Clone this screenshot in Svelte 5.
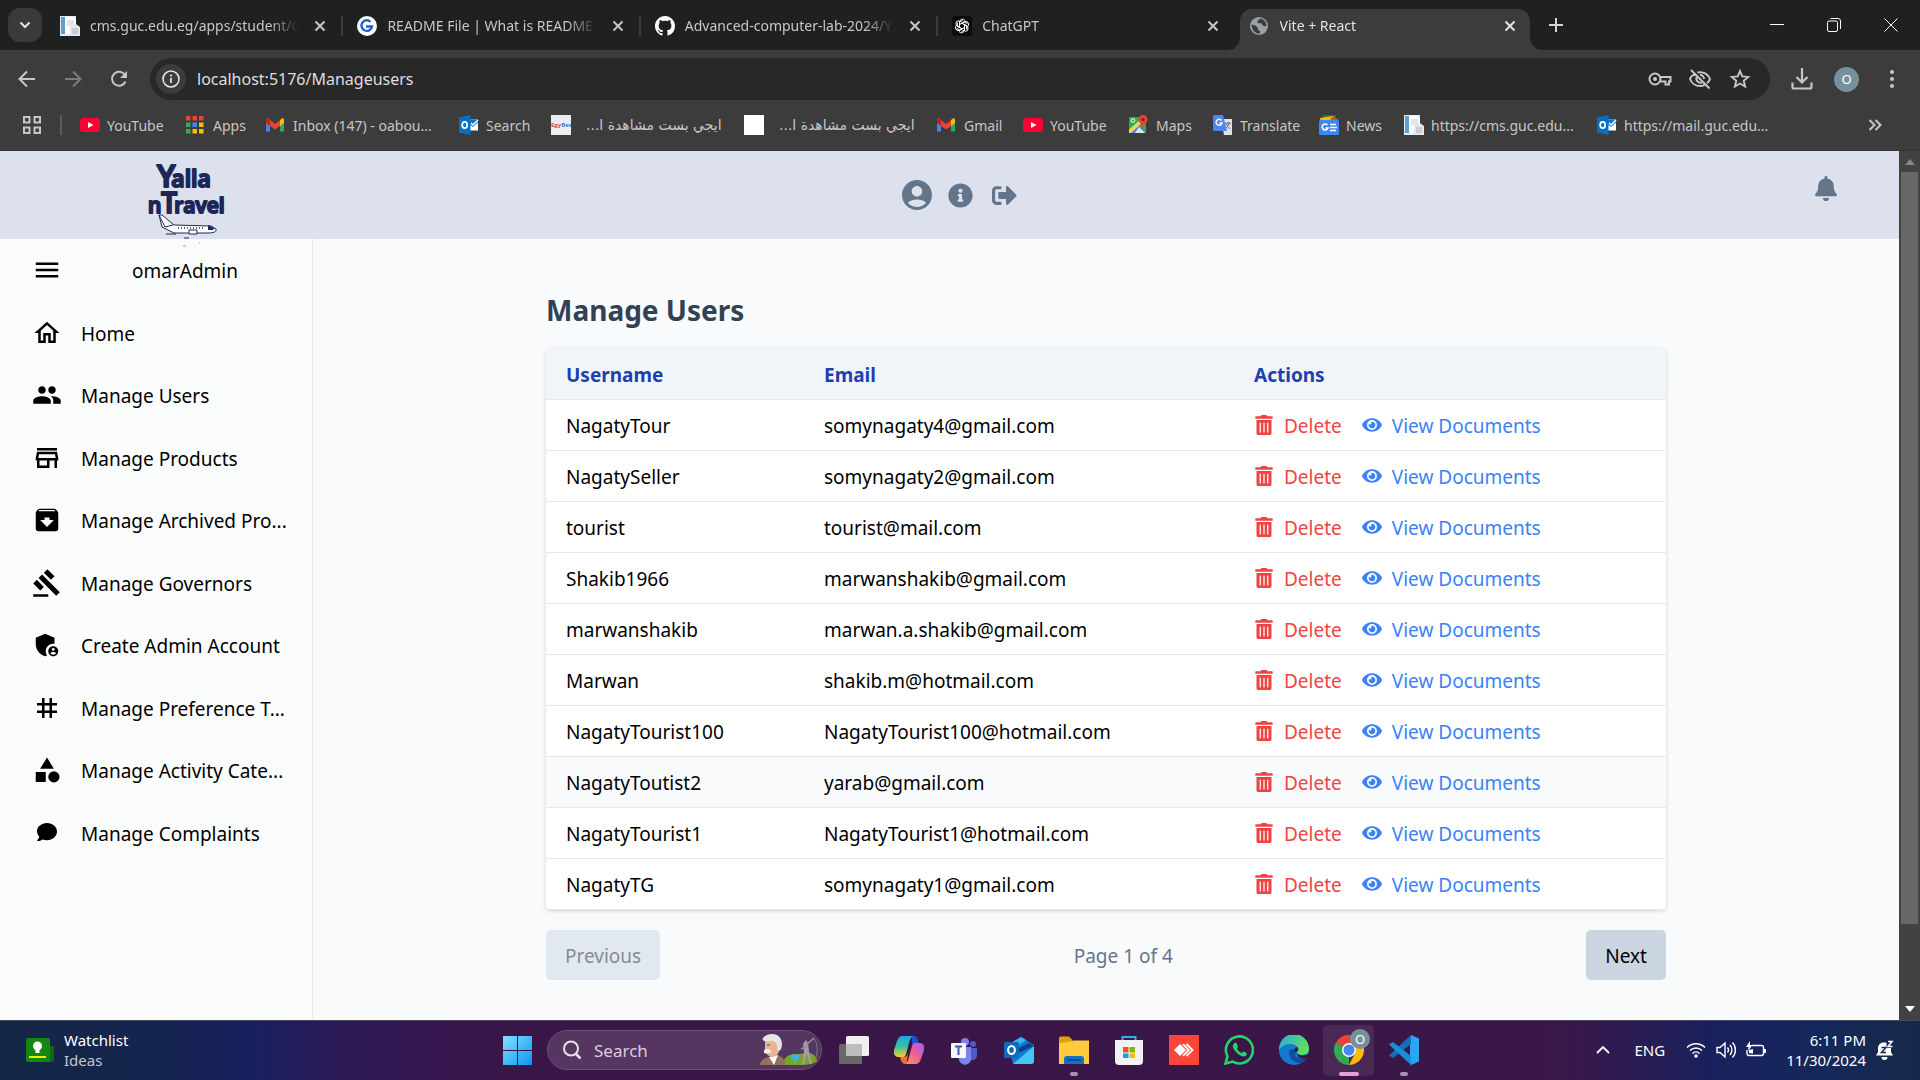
<script>
  const tabs = [
    { icon: 'doc', title: 'cms.guc.edu.eg/apps/student/C' },
    { icon: 'gfg', title: 'README File | What is README' },
    { icon: 'github', title: 'Advanced-computer-lab-2024/Y' },
    { icon: 'gpt', title: 'ChatGPT' },
    { icon: 'globe', title: 'Vite + React', active: true }
  ];

  const bookmarks = [
    { icon: 'youtube', label: 'YouTube' },
    { icon: 'apps', label: 'Apps' },
    { icon: 'gmail', label: 'Inbox (147) - oabou...' },
    { icon: 'outlookmail', label: 'Search' },
    { icon: 'egybest', label: 'ايجي بست مشاهدة ا...', rtl: true },
    { icon: 'blank', label: 'ايجي بست مشاهدة ا...', rtl: true },
    { icon: 'gmail', label: 'Gmail' },
    { icon: 'youtube', label: 'YouTube' },
    { icon: 'maps', label: 'Maps' },
    { icon: 'translate', label: 'Translate' },
    { icon: 'news', label: 'News' },
    { icon: 'doc', label: 'https://cms.guc.edu...' },
    { icon: 'outlookmail', label: 'https://mail.guc.edu...' }
  ];

  const menu = [
    { label: 'Home', path: 'M12 5.69l5 4.5V18h-2v-6H9v6H7v-7.81l5-4.5M12 3L2 12h3v8h6v-6h2v6h6v-8h3L12 3z' },
    { label: 'Manage Users', path: 'M16 11c1.66 0 2.99-1.34 2.99-3S17.66 5 16 5c-1.66 0-3 1.34-3 3s1.34 3 3 3zm-8 0c1.66 0 2.99-1.34 2.99-3S9.66 5 8 5C6.34 5 5 6.34 5 8s1.34 3 3 3zm0 2c-2.33 0-7 1.17-7 3.5V19h14v-2.5c0-2.33-4.67-3.5-7-3.5zm8 0c-.29 0-.62.02-.97.05 1.16.84 1.97 1.97 1.97 3.45V19h6v-2.5c0-2.33-4.67-3.5-7-3.5z' },
    { label: 'Manage Products', path: 'M18.36 9l.6 3H5.04l.6-3h12.72M20 4H4v2h16V4zm0 3H4l-1 5v2h1v6h10v-6h4v6h2v-6h1v-2l-1-5zM6 18v-4h6v4H6z' },
    { label: 'Manage Archived Pro...', path: 'M20.54 5.23l-1.39-1.68C18.88 3.21 18.47 3 18 3H6c-.47 0-.88.21-1.16.55L3.46 5.23C3.17 5.57 3 6.02 3 6.5V19c0 1.1.9 2 2 2h14c1.1 0 2-.9 2-2V6.5c0-.48-.17-.93-.46-1.27zM12 17.5L6.5 12H10v-2h4v2h3.5L12 17.5zM5.12 5l.81-1h12l.94 1H5.12z' },
    { label: 'Manage Governors', path: 'M1 21h12v2H1v-2zM5.245 8.07l2.83-2.827 14.14 14.142-2.828 2.828L5.245 8.07zM12.317 1l5.657 5.656-2.83 2.83-5.654-5.66L12.317 1zM3.825 9.485l5.657 5.657-2.828 2.828-5.657-5.657 2.828-2.828z' },
    { label: 'Create Admin Account', path: 'M17 11c.34 0 .67.04 1 .09V6.27L10.5 3 3 6.27v4.91c0 4.54 3.2 8.79 7.5 9.82.55-.13 1.08-.32 1.6-.55-.69-.98-1.1-2.17-1.1-3.45 0-3.31 2.69-6 6-6zM17 13c-2.21 0-4 1.79-4 4s1.79 4 4 4 4-1.79 4-4-1.79-4-4-4zm0 1.38c.62 0 1.12.51 1.12 1.12s-.51 1.12-1.12 1.12-1.12-.51-1.12-1.12.5-1.12 1.12-1.12zm0 5.37c-.93 0-1.74-.46-2.24-1.17.05-.72 1.51-1.08 2.24-1.08s2.19.36 2.24 1.08c-.5.71-1.31 1.17-2.24 1.17z' },
    { label: 'Manage Preference T...', path: 'M20 10V8h-4V4h-2v4h-4V4H8v4H4v2h4v4H4v2h4v4h2v-4h4v4h2v-4h4v-2h-4v-4h4zm-6 4h-4v-4h4v4z' },
    { label: 'Manage Activity Cate...', path: 'M12 2l-5.5 9h11L12 2zM17.5 13a4.5 4.5 0 1 0 0 9a4.5 4.5 0 1 0 0-9zM3 13.5h8v8H3z' },
    { label: 'Manage Complaints', path: 'M12 4c-4.4 0-8 2.9-8 6.6 0 1.6.7 3.100 1.800 4.200-.2 1.100-.7 2.100-1.600 2.900-.3.300-.1.700.3.700 1.600 0 2.900-.600 3.900-1.300 1.100.4 2.300.600 3.600.6 4.400 0 8-3 8-6.900S16.400 4 12 4z' }
  ];

  const users = [
    ['NagatyTour', 'somynagaty4@gmail.com'],
    ['NagatySeller', 'somynagaty2@gmail.com'],
    ['tourist', 'tourist@mail.com'],
    ['Shakib1966', 'marwanshakib@gmail.com'],
    ['marwanshakib', 'marwan.a.shakib@gmail.com'],
    ['Marwan', 'shakib.m@hotmail.com'],
    ['NagatyTourist100', 'NagatyTourist100@hotmail.com'],
    ['NagatyToutist2', 'yarab@gmail.com'],
    ['NagatyTourist1', 'NagatyTourist1@hotmail.com'],
    ['NagatyTG', 'somynagaty1@gmail.com']
  ];
  const hovered = 7;

  const taskApps = ['taskview', 'copilot', 'teams', 'outlook', 'explorer', 'store', 'anydesk', 'whatsapp', 'edge', 'chrome', 'vscode'];
  const running = ['explorer', 'vscode'];
</script>

{#snippet closeX()}
  <svg width="12" height="12" viewBox="0 0 12 12"><path d="M1.500 1.500l9 9M10.500 1.500l-9 9" stroke="currentColor" stroke-width="2" fill="none" /></svg>
{/snippet}

{#snippet siteIcon(name)}
  <svg class="site" viewBox="0 0 20 20">
    {#if name === 'doc'}
      <path d="M0 0h16v20H0z" fill="#e8edf2" /><path d="M1 1h4v17H1z" fill="#5f9fd0" />
      <path d="M5 1h8l3 3v14H5z" fill="#fff" /><path d="M7 5h7M7 7h7M7 9h7" stroke="#c3ccd4" />
      <path d="M10 8h6l4 3v9H10z" fill="#e4e8ec" /><path d="M12 13h6M12 15h6M12 17h6" stroke="#aab4bd" />
    {:else if name === 'gfg'}
      <circle cx="10" cy="10" r="10" fill="#fff" />
      <path d="M13.500 5.800A5.300 5.300 0 1 0 15 10.500H9" fill="none" stroke="#1f5fd0" stroke-width="2.400" />
    {:else if name === 'github'}
      <path fill="#fff" transform="scale(1.25)" d="M8 0C3.58 0 0 3.58 0 8c0 3.54 2.29 6.53 5.47 7.59.4.07.55-.17.55-.38 0-.19-.01-.82-.01-1.49-2.01.37-2.53-.49-2.69-.94-.09-.23-.48-.94-.82-1.13-.28-.15-.68-.52-.01-.53.63-.01 1.08.58 1.23.82.72 1.21 1.87.87 2.33.66.07-.52.28-.87.51-1.07-1.78-.2-3.64-.89-3.64-3.95 0-.87.31-1.59.82-2.15-.08-.2-.36-1.02.08-2.12 0 0 .67-.21 2.2.82.64-.18 1.32-.27 2-.27s1.36.09 2 .27c1.53-1.04 2.2-.82 2.2-.82.44 1.1.16 1.92.08 2.12.51.56.82 1.27.82 2.15 0 3.07-1.87 3.75-3.65 3.95.29.25.54.73.54 1.48 0 1.07-.01 1.93-.01 2.2 0 .21.15.46.55.38A8.01 8.01 0 0 0 16 8c0-4.420-3.580-8-8-8z" />
    {:else if name === 'gpt'}
      <rect width="20" height="20" rx="3" fill="#0c0c0c" />
      <g fill="none" stroke="#fff" stroke-width="1">
        {#each [0, 60, 120, 180, 240, 300] as a}
          <path transform="rotate({a} 10 10)" d="M7.500 9.900V6.200a3 3 0 0 1 5.600-1.500M7.500 8.600l4.600-2.700 3 1.700" />
        {/each}
      </g>
    {:else if name === 'globe'}
      <circle cx="9" cy="10" r="9" fill="#9aa0a6" />
      <path d="M1.500 8.500l4 1 2.500 2.500v2l2 1v2.500c-4 .5-8-2.500-8.500-9zM10 2.500c-1 2-3 2-2.500 4 1 1.500 3 0 4.500 1.500.5 2 2 2.500 4.500 2C16.500 6 13.500 3 10 2.500z" fill="#3c3c3c" />
    {:else if name === 'youtube'}
      <rect y="3" width="20" height="14" rx="3.500" fill="#ff0033" /><path d="M8 7l5.500 3L8 13z" fill="#fff" />
    {:else if name === 'apps'}
      {#each ['#ea4335', '#ea4335', '#ea4335', '#34a853', '#4285f4', '#fbbc04', '#34a853', '#fbbc04', '#fbbc04'] as c, i}
        <rect x={(i % 3) * 6.500} y={1 + Math.floor(i / 3) * 6.500} width="4.500" height="4.500" fill={c} />
      {/each}
    {:else if name === 'gmail'}
      <path d="M0 5v11.500h4V8z" fill="#4285f4" /><path d="M18 5v11.500h-4V8z" fill="#34a853" />
      <path d="M14 5l2-1.500c1-.5 2 .3 2 1.500v3l-4 3z" fill="#fbbc04" />
      <path d="M4 5L2 3.500C1 3 0 3.800 0 5v3l9 6.500L14 11V5.200L9 9z" fill="#ea4335" /><path d="M0 5v3l4 3V5L2 3.500C1 3 0 3.800 0 5z" fill="#c5221f" />
    {:else if name === 'outlookmail'}
      <path d="M10 4.500h9v11h-9z" fill="#fff" /><path d="M10 4.500h9v3L14 12l-4-3z" fill="#0a78d0" /><path d="M12 8l2 2 5-5" stroke="#fff" stroke-width="1.500" fill="none" />
      <path d="M0 2.500L11.500 0v20L0 17.500z" fill="#0072c6" /><ellipse cx="5.700" cy="10" rx="2.500" ry="3.200" fill="none" stroke="#fff" stroke-width="1.800" />
    {:else if name === 'egybest'}
      <rect width="20" height="20" fill="#e9eef3" />
      <text x="0" y="12" font-size="6" font-weight="700" fill="#e44040" font-family="Open Sans, sans-serif">Egy<tspan fill="#2c7fc4">Best</tspan></text>
    {:else if name === 'blank'}
      <rect width="20" height="20" fill="#fff" />
    {:else if name === 'maps'}
      <rect y="2" width="17" height="16" rx="1" fill="#34a853" /><path d="M0 18L9 9l8 9z" fill="#4285f4" /><path d="M0 14.500L12 4l3 2L2 18H0z" fill="#fbd24b" /><path d="M6 18l4-6 6 6z" fill="#dfe6ea" />
      <circle cx="4" cy="5.500" r="1.800" fill="none" stroke="#fff" />
      <path d="M14 0a4.500 4.500 0 0 1 4.500 4.500c0 3-3.500 4.500-4.500 9-1-4.500-4.500-6-4.500-9A4.500 4.500 0 0 1 14 0z" fill="#ea4335" /><circle cx="14" cy="4.500" r="1.600" fill="#8c1b12" />
    {:else if name === 'translate'}
      <path d="M8 4h11v16H11z" fill="#dfe3e6" /><path d="M12 8h6M15 7v2M13 13l4-5M13 9l4 5" stroke="#6c7780" stroke-width="1.200" />
      <path d="M1.500 0H10l4 16H1.500C.7 16 0 15.300 0 14.500v-13C0 .7.700 0 1.500 0z" fill="#4a86f0" />
      <path d="M8.500 5.500A3 3 0 1 0 9 8H6.500" fill="none" stroke="#fff" stroke-width="1.400" />
    {:else if name === 'news'}
      <path d="M4 0h13v8H4z" fill="#188038" /><path d="M1 3l13-2 2 7H2z" fill="#fbbc04" /><path d="M12 2l7 2-1 5h-7z" fill="#ea4335" />
      <rect y="5" width="20" height="15" rx="1.500" fill="#4285f4" /><path d="M8.500 10A3 3 0 1 0 9 13H6.500M11 9.500h6M11 12.500h7M11 15.500h6" fill="none" stroke="#fff" stroke-width="1.600" />
    {/if}
  </svg>
{/snippet}

{#snippet appIcon(name)}
  <svg width="30" height="30" viewBox="0 0 30 30">
    {#if name === 'taskview'}
      <rect x="7" y="1" width="23" height="20" rx="1.500" fill="#f0f0f0" /><rect y="9" width="23" height="20" rx="1.500" fill="#686868" /><path d="M7 9h16v12H7z" fill="#bdbdbd" />
    {:else if name === 'copilot'}
      <defs>
        <linearGradient id="cp1" x1="0" y1="0" x2="0" y2="1"><stop offset="0" stop-color="#1aa5e8" /><stop offset=".5" stop-color="#3cc0a0" /><stop offset="1" stop-color="#f5d12b" /></linearGradient>
        <linearGradient id="cp2" x1="1" y1="0" x2="0" y2="1"><stop offset="0" stop-color="#a45cf0" /><stop offset=".5" stop-color="#ec5f95" /><stop offset="1" stop-color="#ff9a4d" /></linearGradient>
      </defs>
      <path d="M18 1h2c2 0 3 1 3.500 3l1.500 5h-7z" fill="#2050d8" />
      <path d="M8 1h11c-2 1-3 3-4 7l-3 11c-1 3-2 3-4 3H4c-3 0-5-3-4-7l3-9c1-3 3-5 5-5z" fill="url(#cp1)" />
      <path d="M6 22h4c2 0 3-1 4-4l-1 8c0 2-1 3-3 3-2-1-3-3-4-7z" fill="#f26b3c" />
      <path d="M22 29H11c2-1 3-3 4-7l3-11c1-3 2-3 4-3h4c3 0 5 3 4 7l-3 9c-1 3-3 5-5 5z" fill="url(#cp2)" />
    {:else if name === 'teams'}
      <circle cx="16" cy="7" r="4" fill="#7b83eb" /><circle cx="24" cy="9" r="3" fill="#5059c9" /><path d="M19 13h9v8a5 5 0 0 1-9 2z" fill="#5059c9" /><path d="M9 12h13v10a6 6 0 0 1-12 3z" fill="#7b83eb" />
      <rect x="2" y="8" width="15" height="15" rx="1" fill="#f5f5fb" /><path d="M6 11.500h7M9.500 11.500V20" stroke="#4b53bc" stroke-width="2" />
    {:else if name === 'outlook'}
      <path d="M4 10L17 2l13 8v16a3 3 0 0 1-3 3H9z" fill="#1179cf" /><path d="M5 9L17 2l5 3L8 15z" fill="#35b8f1" /><path d="M30 11v15a3 3 0 0 1-3 3H9z" fill="#42c6f5" /><path d="M14 18l16-7-5-3-14 7z" fill="#0a3f8c" />
      <rect y="7" width="15" height="16" rx="1.500" fill="#0f6cbd" /><ellipse cx="7.500" cy="15" rx="3.400" ry="4" fill="none" stroke="#fff" stroke-width="2" />
    {:else if name === 'explorer'}
      <path d="M0 3a1.500 1.500 0 0 1 1.500-1.500H10l3 3V12H0z" fill="#e0a10a" /><path d="M0 8l10-1 4-1.500h16V29H0z" fill="#ffcb3d" /><path d="M5 29v-5a3 3 0 0 1 3-3h14a3 3 0 0 1 3 3v5z" fill="#1472c4" /><path d="M8 24h14v2H8z" fill="#0b4a8c" />
    {:else if name === 'store'}
      <path d="M8.500 7V2h13v5" fill="none" stroke="#2db0f0" stroke-width="2" /><path d="M1 5h28v21a4 4 0 0 1-4 4H5a4 4 0 0 1-4-4z" fill="#f2f2f2" />
      <path d="M9 12h5.500v5.500H9z" fill="#f25022" /><path d="M15.500 12H21v5.500h-5.500z" fill="#7fba00" /><path d="M9 18.500h5.500V23H9z" fill="#00a4ef" /><path d="M15.500 18.500H21V23h-5.500z" fill="#ffb900" />
    {:else if name === 'anydesk'}
      <rect width="30" height="30" fill="#fb4538" /><path d="M5 15l6-6 6 6-6 6z" fill="#fff" /><path d="M16 9.500l5.500 5.500-5.500 5.500" stroke="#fb4538" stroke-width="2" fill="none" /><path d="M17.500 9l6 6-6 6M14 9.200l5.700 5.800-5.700 5.800" stroke="#fff" stroke-width="1.800" fill="none" />
    {:else if name === 'whatsapp'}
      <path d="M1.500 28.500l2-7.200A13.500 13.500 0 1 1 8.600 26.600z" fill="none" stroke="#25d366" stroke-width="2.600" />
      <path d="M10.500 8c-2.500 1.500-2 5 1 8.500s7.500 6 10 4.500c1.500-1 1.500-2.500 1-3l-3-1.500c-1 .2-1.200 1.500-2 1.500-2-.8-4-3-4.500-4.500 0-.7 1-1 1-2L12.500 8c-.5-.5-1.300-.5-2 0z" fill="#25d366" />
    {:else if name === 'edge'}
      <defs><linearGradient id="ed" x1="0" y1="0" x2="1" y2=".4"><stop offset="0" stop-color="#2aa8e8" /><stop offset="1" stop-color="#5ee05a" /></linearGradient></defs>
      <circle cx="15" cy="15" r="15" fill="#1679cd" /><path d="M0 15A15 15 0 0 1 30 13c0 5-3 7-7 7-3 0-5-1-5-2s2-2 1-5C17 8 6 7 0 15z" fill="url(#ed)" />
      <path d="M10 17c0 7 5 11 11 11 3-1 5-2 7-5-6 3-12-1-12-5 0-2 1-2.500 2-3-3-2-8-1-8 2z" fill="#0c4f9c" /><path d="M17 18c-1-1 3-2 2-5 0 0-2-2-3 1-1 2 0 3 1 4zM18 18c1 2 5 3 8 2 2 0 4-1 4-2v4c-5 4-12 1-12-4z" fill="#3a1747" />
    {:else if name === 'chrome'}
      <path d="M15 15L2 7.500A15 15 0 0 1 28 7.500z" fill="#ea4335" /><path d="M15 15v15A15 15 0 0 1 2 7.500z" fill="#34a853" /><path d="M15 8.200h13.400A15 15 0 0 1 15 30l6-11.500z" fill="#fbbc04" />
      <circle cx="15" cy="15" r="7" fill="#fff" /><circle cx="15" cy="15" r="5.500" fill="#4285f4" />
    {:else if name === 'vscode'}
      <path d="M22 0l8 3.500v23L22 30l-1-8V8z" fill="#2aa5f2" /><path d="M22 0v9L4 23 0 20.500z" fill="#0f6fb8" /><path d="M22 30v-9L4 7 0 9.500z" fill="#1a8ddb" />
    {/if}
  </svg>
{/snippet}

<div class="screen">
  <header class="browser">
    <div class="tabstrip">
      <button class="tabsearch" aria-label="Search tabs"><svg width="12" height="8" viewBox="0 0 12 8"><path d="M1.500 1.500L6 6l4.500-4.500" stroke="currentColor" stroke-width="2" fill="none" /></svg></button>
      <div class="tabs">
        {#each tabs as tab}
          <div class="tab" class:active={tab.active}>
            {@render siteIcon(tab.icon)}
            <span class="tabtitle">{tab.title}</span>
            <button class="bare" aria-label="Close tab">{@render closeX()}</button>
          </div>
        {/each}
      </div>
      <button class="bare newtab" aria-label="New tab"><svg width="14" height="14" viewBox="0 0 14 14"><path d="M7 0v14M0 7h14" stroke="currentColor" stroke-width="2" /></svg></button>
      <div class="wincontrols">
        <button class="bare" aria-label="Minimize"><svg width="14" height="14" viewBox="0 0 14 14"><path d="M0 6.500h14" stroke="#fff" /></svg></button>
        <button class="bare" aria-label="Restore"><svg width="14" height="14" viewBox="0 0 14 14"><path d="M.5 4.500a1.500 1.500 0 0 1 1.500-1.500h7a1.500 1.500 0 0 1 1.500 1.500v7.500a1.500 1.500 0 0 1-1.500 1.500H2a1.500 1.500 0 0 1-1.500-1.500zM3.500 .5H11a2.500 2.500 0 0 1 2.500 2.500v8" stroke="#fff" fill="none" /></svg></button>
        <button class="bare" aria-label="Close"><svg width="14" height="14" viewBox="0 0 14 14"><path d="M.5 .5l13 13M13.500 .5l-13 13" stroke="#fff" /></svg></button>
      </div>
    </div>

    <div class="toolbar">
      <div class="navs">
        <button class="bare" aria-label="Back"><svg width="24" height="24" viewBox="0 0 24 24"><path d="M20 12H5M12 4.500L4.500 12l7.500 7.500" stroke="currentColor" stroke-width="2" fill="none" /></svg></button>
        <button class="bare dim" aria-label="Forward"><svg width="24" height="24" viewBox="0 0 24 24"><path d="M4 12h15M12 4.500l7.500 7.500-7.500 7.500" stroke="currentColor" stroke-width="2" fill="none" /></svg></button>
        <button class="bare" aria-label="Reload"><svg width="24" height="24" viewBox="0 0 24 24"><path d="M18.500 14.500A7 7 0 1 1 18 8l1 2" stroke="currentColor" stroke-width="2" fill="none" /><path d="M20 4v7h-7z" fill="currentColor" /></svg></button>
      </div>
      <div class="omnibox">
        <button class="bare siteinfo" aria-label="Site information"><svg width="20" height="20" viewBox="0 0 20 20"><circle cx="10" cy="10" r="8" fill="none" stroke="currentColor" stroke-width="1.600" /><path d="M10 9v5M10 5.500v2" stroke="currentColor" stroke-width="1.800" /></svg></button>
        <input aria-label="Address" value="localhost:5176/Manageusers" />
        <button class="bare" aria-label="Passwords"><svg width="24" height="24" viewBox="0 0 24 24"><g fill="none" stroke="currentColor" stroke-width="2"><circle cx="7" cy="12" r="5.500" /><path d="M12.500 10H22.500v4.500h-1.500v3h-3.500v-3h-5" /></g><circle cx="7" cy="12" r="2" fill="currentColor" /></svg></button>
        <button class="bare" aria-label="Tracking protection"><svg width="24" height="24" viewBox="0 0 24 24"><g fill="none" stroke="currentColor" stroke-width="2"><path d="M6.500 7C4 8.500 2.500 10.500 2 12c1.500 4 5.500 7 10 7 1.500 0 3-.3 4.500-1M9.500 5.500C16 4 20.500 8 22 12c-.5 1.500-1.500 3-3 4.200M3 3l18.500 18.500" /><path d="M8.800 10a4 4 0 0 0 5 5.500M12 8a4 4 0 0 1 4 4" /></g></svg></button>
        <button class="bare" aria-label="Bookmark this page"><svg width="24" height="24" viewBox="0 0 24 24"><path d="M12 4l2.300 5.400 5.900.5-4.500 3.900 1.400 5.700-5.100-3-5.100 3 1.400-5.700-4.500-3.900 5.900-.5z" fill="none" stroke="currentColor" stroke-width="1.900" /></svg></button>
      </div>
      <div class="actions">
        <button class="bare" aria-label="Downloads"><svg width="22" height="22" viewBox="0 0 22 22"><path d="M11 0v14M5.500 9l5.500 5.500L16.500 9M1.500 14.500v4.500a1.500 1.500 0 0 0 1.500 1.500h16a1.500 1.500 0 0 0 1.500-1.500v-4.500" stroke="currentColor" stroke-width="2.200" fill="none" /></svg></button>
        <button class="avatar" aria-label="Profile">O</button>
        <button class="bare" aria-label="Menu"><svg width="6" height="20" viewBox="0 0 6 20" fill="currentColor"><circle cx="3" cy="3" r="2" /><circle cx="3" cy="10" r="2" /><circle cx="3" cy="17" r="2" /></svg></button>
      </div>
    </div>

    <nav class="bookmarkbar" aria-label="Bookmarks">
      <button class="bare" aria-label="Tab groups"><svg width="20" height="20" viewBox="0 0 20 20"><g fill="none" stroke="currentColor" stroke-width="2"><path d="M2 2h5.500v5.500H2zM12.500 2H18v5.500h-5.500zM2 12.500h5.500V18H2zM12.500 12.500H18V18h-5.500z" /></g></svg></button>
      <span class="divider"></span>
      <div class="bookmarks">
        {#each bookmarks as b}
          <a href="#bookmark">{@render siteIcon(b.icon)}{#if b.rtl}<bdi class="rtl" dir="rtl" lang="ar">{b.label}</bdi>{:else}<span>{b.label}</span>{/if}</a>
        {/each}
      </div>
      <button class="bare" aria-label="More bookmarks"><svg width="14" height="12" viewBox="0 0 14 12"><path d="M1.500 1l5 5-5 5M7.500 1l5 5-5 5" stroke="currentColor" stroke-width="2" fill="none" /></svg></button>
    </nav>
  </header>

  <div class="viewport">
    <div class="page">
      <header class="topbar">
        <svg class="logo" width="80" height="84" viewBox="0 0 80 84" role="img" aria-label="Yalla nTravel">
          <g fill="#1d2757" stroke="#1d2757" stroke-width="2" stroke-linejoin="round" font-family="Open Sans, sans-serif" font-weight="600">
            <text x="10" y="34" font-size="23"><tspan font-size="31">Y</tspan><tspan dx="-4">alla</tspan></text>
            <text x="1" y="60" font-size="21">n<tspan font-size="28">T</tspan><tspan dx="-3">ravel</tspan></text>
          </g>
          <g fill="#fff" stroke="#1d2757" stroke-width="1">
            <path d="M12 62l3 12 12 6h34c5 0 9-1 8-4l-5-3-37-1-12-10z" /><path d="M12 62l6 12 8-2" fill="none" />
            <path d="M42 77h8v4h-8z" />
          </g>
          <path d="M31 75h26" stroke="#1d2757" stroke-width="1.500" stroke-dasharray="1 2" /><path d="M61 72l6 3-1 2h-5z" fill="#1d2757" /><path d="M19 81h10M37 85h5" stroke="#1d2757" />
          <path d="M36 93h3M52 90h1" stroke="#b9bfce" stroke-width="1.500" />
        </svg>
        <nav class="toplinks" aria-label="Account">
          <a href="#profile" aria-label="Profile"><svg width="36" height="36" viewBox="0 0 24 24"><path fill="currentColor" d="M12 2C6.480 2 2 6.480 2 12s4.480 10 10 10 10-4.480 10-10S17.520 2 12 2zm0 4c1.930 0 3.500 1.570 3.500 3.500S13.930 13 12 13s-3.500-1.570-3.500-3.500S10.070 6 12 6zm0 14c-2.030 0-4.430-.820-6.140-2.880C7.550 15.800 9.680 15 12 15s4.450.800 6.140 2.120C16.430 19.180 14.030 20 12 20z" /></svg></a>
          <a href="#info" aria-label="Information"><svg width="25" height="25" viewBox="0 0 512 512"><path fill="currentColor" d="M256 8C119.043 8 8 119.083 8 256c0 136.997 111.043 248 248 248s248-111.003 248-248C504 119.083 392.957 8 256 8zm0 110c23.196 0 42 18.804 42 42s-18.804 42-42 42-42-18.804-42-42 18.804-42 42-42zm56 254c0 6.627-5.373 12-12 12h-88c-6.627 0-12-5.373-12-12v-24c0-6.627 5.373-12 12-12h12v-64h-12c-6.627 0-12-5.373-12-12v-24c0-6.627 5.373-12 12-12h64c6.627 0 12 5.373 12 12v100h12c6.627 0 12 5.373 12 12v24z" /></svg></a>
          <a href="#logout" aria-label="Log out"><svg width="25" height="25" viewBox="0 0 512 512"><path fill="currentColor" d="M497 273L329 441c-15 15-41 4.500-41-17v-96H152c-13.300 0-24-10.700-24-24v-96c0-13.300 10.700-24 24-24h136V88c0-21.400 25.900-32 41-17l168 168c9.300 9.400 9.300 24.600 0 34zM192 436v-40c0-6.600-5.400-12-12-12H96c-17.700 0-32-14.300-32-32V160c0-17.700 14.300-32 32-32h84c6.600 0 12-5.400 12-12V76c0-6.600-5.400-12-12-12H96c-53 0-96 43-96 96v192c0 53 43 96 96 96h84c6.600 0 12-5.400 12-12z" /></svg></a>
        </nav>
        <button class="bare bell" aria-label="Notifications"><svg width="22" height="25" viewBox="0 0 448 512"><path fill="currentColor" d="M224 512c35.320 0 63.970-28.650 63.970-64H160.030c0 35.350 28.650 64 63.970 64zm215.390-149.710c-19.320-20.760-55.470-51.990-55.470-154.290 0-77.700-54.480-139.900-127.940-155.160V32c0-17.670-14.320-32-31.980-32s-31.980 14.330-31.980 32v20.840C118.560 68.100 64.080 130.300 64.080 208c0 102.300-36.150 133.530-55.470 154.290-6 6.450-8.660 14.160-8.610 21.710.11 16.400 12.980 32 32.100 32h383.800c19.120 0 32-15.600 32.100-32 .05-7.550-2.610-15.270-8.610-21.710z" /></svg></button>
      </header>

      <div class="body">
        <aside class="sidebar">
          <div class="side-list">
            <div class="side-row">
              <button class="bare" aria-label="Toggle menu"><svg width="30" height="30" viewBox="0 0 24 24"><path d="M3 18h18v-2H3v2zm0-5h18v-2H3v2zm0-7v2h18V6H3z" /></svg></button>
              <span class="who">omarAdmin</span>
            </div>
            {#each menu as item}
              <a class="side-row" href="#section"><svg width="30" height="30" viewBox="0 0 24 24"><path d={item.path} /></svg><span>{item.label}</span></a>
            {/each}
          </div>
        </aside>

        <main>
          <div class="container">
            <h1>Manage Users</h1>
            <div class="card">
              <table>
                <colgroup><col class="c1" /><col class="c2" /><col /></colgroup>
                <thead><tr><th>Username</th><th>Email</th><th>Actions</th></tr></thead>
                <tbody>
                  {#each users as [name, email], i}
                    <tr class:hovered={i === hovered}>
                      <td>{name}</td>
                      <td>{email}</td>
                      <td>
                        <div class="cell">
                          <button class="act delete"><svg width="20" height="20" viewBox="0 0 448 512"><path fill="currentColor" d="M32 464a48 48 0 0 0 48 48h288a48 48 0 0 0 48-48V128H32zm272-256a16 16 0 0 1 32 0v224a16 16 0 0 1-32 0zm-96 0a16 16 0 0 1 32 0v224a16 16 0 0 1-32 0zm-96 0a16 16 0 0 1 32 0v224a16 16 0 0 1-32 0zM432 32H312l-9.400-18.700A24 24 0 0 0 281.100 0H166.800a23.720 23.720 0 0 0-21.400 13.300L136 32H16A16 16 0 0 0 0 48v32a16 16 0 0 0 16 16h416a16 16 0 0 0 16-16V48a16 16 0 0 0-16-16z" /></svg>Delete</button>
                          <button class="act view"><svg width="20" height="20" viewBox="0 0 576 512"><path fill="currentColor" d="M572.520 241.400C518.290 135.590 410.930 64 288 64S57.680 135.640 3.480 241.410a32.350 32.350 0 0 0 0 29.190C57.710 376.410 165.070 448 288 448s230.320-71.640 284.520-177.410a32.350 32.350 0 0 0 0-29.190zM288 400a144 144 0 1 1 144-144 143.930 143.930 0 0 1-144 144zm0-240a95.310 95.310 0 0 0-25.310 3.790 47.850 47.850 0 0 1-66.900 66.900A95.780 95.780 0 1 0 288 160z" /></svg>View Documents</button>
                        </div>
                      </td>
                    </tr>
                  {/each}
                </tbody>
              </table>
            </div>
            <div class="pager">
              <button class="prev" disabled>Previous</button>
              <span>Page 1 of 4</span>
              <button class="next">Next</button>
            </div>
          </div>
        </main>
      </div>
    </div>
    <div class="scrollbar">
      <svg width="10" height="6" viewBox="0 0 10 6"><path d="M0 6l5-6 5 6z" fill="#868686" /></svg>
      <span class="thumb"></span>
      <svg width="10" height="6" viewBox="0 0 10 6"><path d="M0 0l5 6 5-6z" fill="#fff" /></svg>
    </div>
  </div>

  <footer class="taskbar">
    <button class="widget">
      <svg width="28" height="24" viewBox="0 0 28 24"><path d="M20 8h6a2 2 0 0 1 2 2v12a2 2 0 0 1-2 2h-8z" fill="#0a6b10" /><rect width="24" height="24" rx="2" fill="#13880f" /><circle cx="11.500" cy="8" r="4.500" fill="#fff" /><path d="M9.500 11h4v4h-4z" fill="#fff" /><path d="M3 18h17v2H3z" fill="#e6f000" /></svg>
      <span><b>Watchlist</b><i>Ideas</i></span>
    </button>
    <div class="center">
      <button class="bare start" aria-label="Start"><svg width="30" height="30" viewBox="0 0 30 30"><defs><linearGradient id="wn" x1="0" y1="0" x2="1" y2="1"><stop offset="0" stop-color="#84e0ff" /><stop offset="1" stop-color="#0c93f0" /></linearGradient></defs><path d="M0 1h14v14H0zM15 1h14v14H15zM0 16h14v14H0zM15 16h14v14H15z" fill="url(#wn)" /></svg></button>
      <label class="search">
        <svg width="20" height="20" viewBox="0 0 20 20"><circle cx="9" cy="8.500" r="7" fill="none" stroke="#e8e0ea" stroke-width="2" /><path d="M13.500 13.500l5 5" stroke="#e8e0ea" stroke-width="2.500" /></svg>
        <input placeholder="Search" aria-label="Search" />
        <svg width="60" height="32" viewBox="0 0 60 32">
          <path d="M24 31c0-8 6-11 14-11 4 0 6-1 12-1 5 1 8 4 8 8-3 3-10 4-16 4z" fill="#79a626" /><path d="M31 22c4-3 8-2 9 1s-4 3-3 6c-3 0-2-5-6-7z" fill="#39b6e6" />
          <path d="M44 10l3-4 2 3 1 8 3 13h-2l-3-10-3 10h-2l2-12z" fill="#a69aa8" /><path d="M46 12l9-8M42 15l6-3" stroke="#9c8f9f" fill="none" stroke-width="1.500" /><path d="M55 4c4 6 4 14 1 22" stroke="#807486" fill="none" />
          <path d="M1 31c0-5 4-7 9-8l8-2c5 1 8 5 9 10z" fill="#96705a" /><path d="M10 23l5 8 4-10z" fill="#fff" /><path d="M6 9c0-4 3-6 8-6s7 5 7 9c0 6-3 10-7 11-5 0-8-4-8-8z" fill="#e6b596" />
          <path d="M4 4c3-4 9-5 14-3 5 3 6 9 4 14-1 2-3 2-4 0 1-4-1-7-4-8-4 0-7 1-9 0-1-1-2-2-1-3z" fill="#e5e3e4" /><path d="M5 16c3-2 6-1 8 2-3 1-6 2-8 1z" fill="#f3f1f0" /><path d="M8 11h3" stroke="#6a4a3a" />
        </svg>
      </label>
      {#each taskApps as name}
        <button class="app" class:current={name === 'chrome'} class:running={running.includes(name)} aria-label={name}>
          {@render appIcon(name)}
          {#if name === 'chrome'}<span class="badge">O</span>{/if}
        </button>
      {/each}
    </div>
    <div class="tray">
      <button class="bare" aria-label="Hidden icons"><svg width="14" height="10" viewBox="0 0 14 10"><path d="M1 8l6-6 6 6" stroke="#fff" stroke-width="1.800" fill="none" /></svg></button>
      <span class="lang">ENG</span>
      <div class="status">
        <svg width="20" height="18" viewBox="0 0 20 18"><g fill="none" stroke="#fff" stroke-width="1.500"><path d="M1 6.500a12.500 12.500 0 0 1 18 0M4 9.500a8.500 8.500 0 0 1 12 0M6.500 12.500a5 5 0 0 1 7 0" /></g><circle cx="10" cy="15" r="1.800" fill="#fff" /></svg>
        <svg width="20" height="18" viewBox="0 0 20 18"><path d="M1 6.500h3L9 2v14l-5-4.500H1zM11.500 6.500a4 4 0 0 1 0 5M14 4a7.500 7.500 0 0 1 0 10M16.500 1.500a11 11 0 0 1 0 15" fill="none" stroke="#fff" stroke-width="1.400" /></svg>
        <svg width="20" height="18" viewBox="0 0 20 18"><path d="M6 4.500h9.500a2 2 0 0 1 2 2v6a2 2 0 0 1-2 2H3a2 2 0 0 1-2-2V9" fill="none" stroke="#fff" stroke-width="1.400" /><path d="M18 8h2v4h-2z" fill="#fff" /><path d="M3 12V9l4-1v4.500zM4 0L0 6h2.500L2 10l4.500-6H4z" fill="#fff" /></svg>
      </div>
      <div class="clock"><time>6:11 PM</time><time>11/30/2024</time></div>
      <button class="bare" aria-label="Do not disturb"><svg width="18" height="20" viewBox="0 0 18 20"><path d="M8 2.500c-4 0-6 2.500-6 6V12l-2 3.500h17L15 12V8.500c0-3.500-3-6-7-6zM5.500 17h6a3 3 0 0 1-6 0z" fill="#fff" /><path d="M5.500 7.500h4.500l-4.500 5H10" stroke="#1a2754" fill="none" stroke-width="1.500" /><path d="M10.500 0h7.500v8h-7.500z" fill="#17285a" /><path d="M12 1.500h4l-4 5h4.500" stroke="#fff" fill="none" stroke-width="1.500" /></svg></button>
    </div>
  </footer>
</div>

<style>
  :global(body) { margin: 0; }
  .screen, .screen :global(*) { box-sizing: border-box; }
  .screen { display: flex; flex-direction: column; height: 100vh; overflow: hidden; font-family: 'Noto Sans', 'Open Sans', sans-serif; font-size: 19px; color: #000; }
  svg { display: block; flex: none; }
  button, input { font: inherit; color: inherit; }
  button { border: 0; padding: 0; background: none; }
  a { color: inherit; text-decoration: none; }
  .bare { display: grid; place-items: center; flex: none; }

  .browser { flex: none; background: #3c3c3c; color: #c7c7c7; font-size: 14px; border-bottom: 1px solid #3a3638; }
  .tabstrip { display: flex; height: 50px; background: #1f2020; }
  .tabsearch { width: 34px; height: 34px; margin: 8px 4px 8px 8px; border-radius: 12px; background: #3a3a3a; display: grid; place-items: center; color: #e3e3e3; }
  .tabs { display: grid; grid-template-columns: repeat(5, minmax(0, 1fr)); flex: 0 1 1487px; }
  .tab { position: relative; display: flex; align-items: center; gap: 10px; margin: 9px 3px 0 4px; padding: 0 14px 8px 10px; border-radius: 12px 12px 0 0; }
  .tab:not(.active)::after { content: ''; position: absolute; right: -3px; top: 7px; width: 2px; height: 20px; background: #3c3c3c; }
  .tab:nth-child(4)::after { display: none; }
  .tab.active { background: #3c3c3c; color: #e3e3e3; }
  .tab.active::before, .tab.active::after { content: ''; position: absolute; bottom: 0; width: 12px; height: 12px; }
  .tab.active::before { left: -12px; background: radial-gradient(circle at 0 0, transparent 12px, #3c3c3c 12px); }
  .tab.active::after { right: -12px; background: radial-gradient(circle at 100% 0, transparent 12px, #3c3c3c 12px); }
  .tabtitle { flex: 1; overflow: hidden; white-space: nowrap; margin-right: 5px; mask-image: linear-gradient(to right, #000 calc(100% - 30px), transparent); }
  .site { width: 20px; height: 20px; overflow: hidden; }
  .newtab { width: 46px; height: 50px; color: #d5d5d5; }
  .wincontrols { display: grid; grid-template-columns: repeat(3, 57px); margin: 0 1px 0 auto; height: 49px; }

  .toolbar { display: flex; align-items: center; height: 58px; padding: 0 16px 0 4px; }
  .navs { display: grid; grid-template-columns: repeat(3, 46px); margin-right: 8px; }
  .dim { color: #7c7c7c; }
  .omnibox { display: flex; flex: 1; align-items: center; gap: 16px; height: 42px; padding: 0 18px 0 6px; border-radius: 21px; background: #282828; }
  .omnibox input { flex: 1; min-width: 0; margin-left: -5px; border: 0; padding: 0; background: none; outline: none; color: #dedede; font-size: 16px; }
  .siteinfo { width: 30px; height: 30px; border-radius: 50%; background: #3c3c3c; color: #e3e3e3; }
  .actions { display: grid; grid-template-columns: 45px 45px 45px; place-items: center; margin: 0 -10px 0 9px; }
  .avatar { width: 25px; height: 25px; border-radius: 50%; background: #78909c; color: #fff; font-size: 13px; }

  .bookmarkbar { display: flex; align-items: center; height: 42px; padding: 0 38px 8px 22px; }
  .divider { width: 2px; height: 20px; margin: 0 18px; background: #5c5c5c; }
  .bookmarks { display: grid; grid-template-columns: 106px 80px 193px 92px 193px 193px 86px 106px 84px 106px 85px 193px 193px; flex: 1; overflow: hidden; }
  .bookmarks a { display: flex; align-items: center; gap: 7px; white-space: nowrap; }
  .rtl { margin-left: 8px; font-family: 'DejaVu Sans', sans-serif; }

  .viewport { display: flex; flex: 1; min-height: 0; }
  .page { display: flex; flex-direction: column; flex: 1; min-width: 0; background: #f9fafc; }
  .topbar { display: grid; grid-template-columns: 1fr auto 1fr; flex: none; height: 88px; background: #dce1ed; color: #64748b; }
  .logo { position: relative; margin: 2px 0 0 147px; overflow: visible; }
  .toplinks { display: flex; align-items: center; gap: 19px; padding-left: 16px; }
  .toplinks a:first-child { margin-right: -6px; }
  .bell { justify-self: end; align-self: start; margin: 25px 62px 0 0; }
  .body { display: flex; flex: 1; min-height: 0; }
  .sidebar { flex: none; width: 313px; border-right: 1px solid #e9eaec; background: #fafcfb; }
  .side-list { display: grid; grid-template-rows: repeat(10, 1fr); height: 625px; }
  .side-row { display: flex; align-items: center; gap: 19px; padding: 0 24px 0 32px; white-space: nowrap; }
  .side-row span { padding-top: 2px; }
  .who { flex: 1; margin-left: 51px; }

  main { flex: 1; min-width: 0; padding: 51px 20px 0; }
  .container { max-width: 1120px; margin: 0 auto; }
  h1 { margin: 0 0 19px; font-size: 28px; line-height: 40px; font-weight: 700; color: #334155; }
  .card { border-radius: 5px; background: #fff; overflow: hidden; box-shadow: 0 1px 4px rgba(0, 0, 0, 0.16); }
  table { width: 100%; border-collapse: collapse; table-layout: fixed; }
  .c1 { width: 258px; }
  .c2 { width: 430px; }
  th, td { padding: 11px 20px 9px; line-height: 30px; text-align: left; border-bottom: 1px solid #e5e7eb; white-space: nowrap; }
  th { background: #f1f5f9; color: #1e40af; font-weight: 700; }
  .hovered { background: #f9fafb; }
  .cell { display: flex; gap: 20px; height: 30px; }
  .act { display: flex; align-items: center; gap: 10px; }
  .act svg { margin-bottom: 2px; }
  .delete { color: #ef4444; }
  .view { color: #3b82f6; }
  .pager { display: flex; align-items: center; justify-content: space-between; margin-top: 20px; color: #64748b; }
  .pager button { height: 50px; padding: 2px 19px 0; border-radius: 5px; }
  .pager span { padding-top: 2px; }
  .prev { background: #e2e8f0; color: #848b94; }
  .next { background: #cbd5e1; color: #000; }

  .scrollbar { display: flex; flex-direction: column; align-items: center; justify-content: space-between; width: 21px; padding: 8px 0; background: #424242; }
  .thumb { flex: 0 0 752px; width: 17px; margin: 7px 0 auto; background: #686868; }

  .taskbar { position: relative; display: flex; align-items: center; justify-content: space-between; flex: none; height: 60px; color: #fff; font-size: 15px; border-top: 1px solid #4a4658; background: linear-gradient(90deg, #142747 0, #15244d 8%, #17205f 13%, #2a1c58 17%, #351750 22%, #3a1648 27%, #3a1747 78%, #3b174a 81%, #2b1c52 85%, #1a205d 89%, #14285a 95%, #17294a 100%); }
  .widget { display: flex; align-items: center; gap: 10px; margin: 0 0 2px 26px; text-align: left; }
  .widget span { display: flex; flex-direction: column; line-height: 20px; }
  .widget b { font-weight: 400; }
  .widget i { font-style: normal; color: #c5c6d2; }
  .center { position: absolute; left: 50%; top: 0; height: 58px; display: flex; align-items: center; transform: translateX(-50%); }
  .start { width: 58px; height: 55px; }
  .search { display: flex; align-items: center; gap: 12px; width: 275px; height: 40px; margin-right: 4px; padding: 0 2px 0 14px; border: 1px solid #6d4f78; border-radius: 20px; background: #553660; font-size: 17px; }
  .search input { flex: 1; min-width: 0; border: 0; padding: 0; background: none; outline: none; }
  .search input::placeholder { color: #d8cfdc; opacity: 1; }
  .app { position: relative; display: grid; place-items: center; width: 51px; height: 51px; margin: 0 2px; border-radius: 5px; }
  .current { background: #4a2957; }
  .running::after, .current::after { content: ''; position: absolute; bottom: 0; width: 8px; height: 4px; border-radius: 2px; background: #a495ad; }
  .current::after { width: 20px; background: #e3a2d2; }
  .badge { position: absolute; top: 4px; right: 4px; width: 20px; height: 20px; border-radius: 50%; background: #78909c; line-height: 20px; font-size: 13px; text-align: center; }
  .tray { display: flex; align-items: center; margin: 0 26px 2px 0; }
  .lang { margin: 0 21px 0 25px; }
  .status { display: flex; gap: 10px; margin-right: 20px; }
  .clock { display: flex; flex-direction: column; text-align: right; line-height: 20px; margin-right: 10px; }
</style>
